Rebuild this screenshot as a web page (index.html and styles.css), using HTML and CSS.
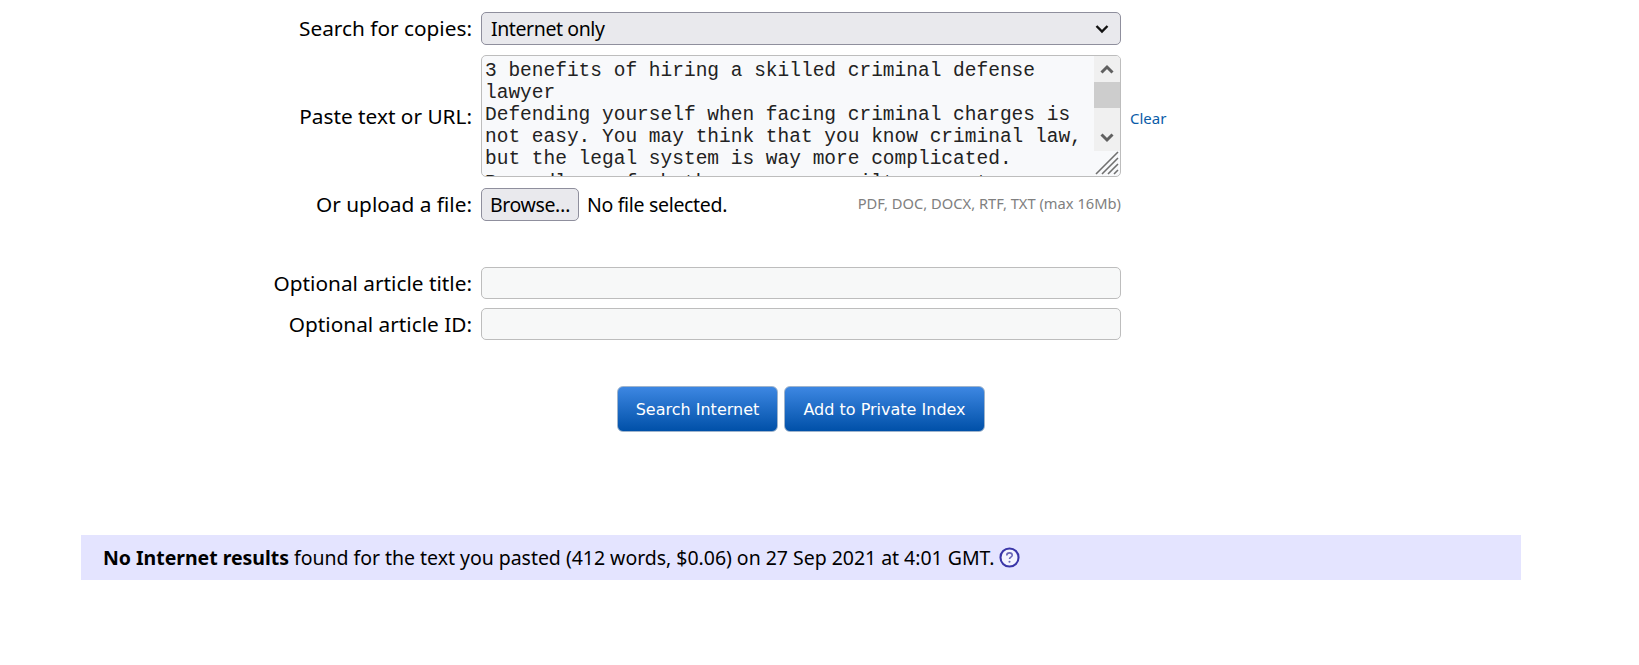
FILE: index.html
```html
<!DOCTYPE html>
<html lang="en">
<head>
  <meta charset="UTF-8" />
  <title>Copyscape Premium</title>
  <link rel="stylesheet" href="styles.css">
</head>
<body>

  <form class="search-form">
    <label class="form-label label-raised">Search for copies:</label>
    <div class="select-box">
      <span>Internet only</span>
      <svg class="select-arrow" width="14" height="10" viewBox="0 0 14 10"><path d="M1.500 2l5.500 5.500L12.500 2" fill="none" stroke="#111" stroke-width="2.400"/></svg>
    </div>
    <div></div>

    <label class="form-label">Paste text or URL:</label>
    <div class="text-box">
      <div class="text-content">3 benefits of hiring a skilled criminal defense
lawyer
Defending yourself when facing criminal charges is
not easy. You may think that you know criminal law,
but the legal system is way more complicated.
<span class="text-last">Regardless of whether you are guilty or not</span></div>
      <div class="scrollbar">
        <div class="scroll-btn">
          <svg width="14" height="10" viewBox="0 0 14 10"><path d="M1.500 8.500L7 3l5.500 5.500" fill="none" stroke="#606060" stroke-width="3"/></svg>
        </div>
        <div class="scroll-thumb"></div>
        <div class="scroll-track"></div>
        <div class="scroll-btn">
          <svg width="14" height="10" viewBox="0 0 14 10"><path d="M1.500 1.500L7 7l5.500-5.500" fill="none" stroke="#606060" stroke-width="3"/></svg>
        </div>
      </div>
      <svg class="resize-grip" width="24" height="24" viewBox="0 0 24 24"><path d="M1 23L23 1M7 23L23 7M13 23l10-10M19 23l4-4" fill="none" stroke="#707070" stroke-width="1.600"/></svg>
    </div>
    <a class="clear-link">Clear</a>

    <label class="form-label label-raised file-cell">Or upload a file:</label>
    <div class="file-row file-cell">
      <span class="browse-btn">Browse…</span>
      <span class="file-name">No file selected.</span>
      <span class="file-types">PDF, DOC, DOCX, RTF, TXT (max 16Mb)</span>
    </div>
    <div></div>

    <label class="form-label optional-first">Optional article title:</label>
    <input class="text-input optional-first" type="text" />
    <div class="optional-first"></div>

    <label class="form-label row-tight">Optional article ID:</label>
    <input class="text-input row-tight" type="text" />
    <div></div>
  </form>

  <div class="actions">
    <button class="blue-btn btn-search" type="button">Search Internet</button>
    <button class="blue-btn btn-add" type="button">Add to Private Index</button>
  </div>

  <div class="result-banner">
    <b>No Internet results</b> found for the text you pasted (412 words, $0.06) on 27 Sep 2021 at 4:01 GMT.
    <svg class="help-icon" width="21" height="21" viewBox="0 0 20 20">
      <circle cx="10" cy="10" r="8.600" fill="#f4f4ff" stroke="#3a36a8" stroke-width="2"/>
      <path d="M7.400 8c0-1.600 1.200-2.400 2.600-2.400s2.600.8 2.600 2.200c0 1.900-2.600 1.900-2.600 3.700" fill="none" stroke="#6a67b8" stroke-width="1.500"/>
      <circle cx="10" cy="14" r="1" fill="#6a67b8"/>
    </svg>
  </div>

</body>
</html>
```

FILE: styles.css
```css
* {
  box-sizing: border-box;
}

body {
  margin: 0;
  padding: 12px 0 0;
  background-color: #ffffff;
  font-family: "Noto Sans", sans-serif;
  font-size: 19.5px;
  color: #000000;
}

.search-form {
  display: grid;
  grid-template-columns: 472px 640px auto;
  column-gap: 9px;
  row-gap: 10px;
  align-items: center;
}

.form-label {
  font-size: 20.8px;
  text-align: right;
  white-space: nowrap;
}

.label-raised {
  margin-bottom: 2px;
}

.select-box {
  height: 33px;
  padding: 0 9px;
  display: flex;
  align-items: center;
  justify-content: space-between;
  letter-spacing: -0.4px;
  background-color: #e9e9ed;
  border: 1px solid #8f8f9d;
  border-radius: 5px;
}

.select-arrow {
  margin-right: 2px;
}

.text-box {
  position: relative;
  height: 122px;
  display: flex;
  overflow: hidden;
  background-color: #f8f9fb;
  border: 1px solid #bdbdbd;
  border-radius: 5px;
}

.text-content {
  flex: 1;
  padding: 4px 3px 0;
  font-family: "Liberation Mono", monospace;
  font-size: 19.5px;
  line-height: 22px;
  color: #222222;
  white-space: pre;
  overflow: hidden;
}

.text-last {
  display: block;
  margin-top: 2px;
}

.scrollbar {
  width: 26px;
  height: 95px;
  display: flex;
  flex-direction: column;
  background-color: #f0f0f0;
}

.scroll-btn {
  height: 26px;
  display: flex;
  align-items: center;
  justify-content: center;
}

.scroll-thumb {
  height: 26px;
  background-color: #cdcdcd;
}

.scroll-track {
  flex: 1;
}

.resize-grip {
  position: absolute;
  right: 1px;
  bottom: 1px;
}

.clear-link {
  margin-top: 4px;
  font-size: 15px;
  color: #0a5ca8;
}

.file-cell {
  margin-top: 1px;
}

.file-row {
  height: 33px;
  display: flex;
  align-items: center;
}

.browse-btn {
  width: 98px;
  height: 33px;
  padding: 0 8px;
  display: flex;
  align-items: center;
  letter-spacing: -0.4px;
  white-space: nowrap;
  background-color: #e9e9ed;
  border: 1px solid #8f8f9d;
  border-radius: 5px;
}

.file-name {
  margin-left: 8px;
  letter-spacing: -0.32px;
}

.file-types {
  margin-left: auto;
  margin-bottom: 3px;
  font-size: 14.7px;
  color: #808080;
}

.optional-first {
  margin-top: 36px;
}

.row-tight {
  margin-top: -1px;
}

.text-input {
  height: 32px;
  padding: 0 8px;
  background-color: #f7f8f8;
  border: 1px solid #bdbdbd;
  border-radius: 5px;
}

.actions {
  margin: 46px 0 0 617px;
  display: flex;
  gap: 6px;
}

.blue-btn {
  height: 46px;
  padding: 0;
  font-family: "DejaVu Sans", sans-serif;
  font-size: 16px;
  color: #ffffff;
  background: linear-gradient(#3d87e2, #0050a8);
  border: 1px solid #9fb4cc;
  border-radius: 6px;
}

.btn-search {
  width: 161px;
}

.btn-add {
  width: 201px;
}

.result-banner {
  width: 1440px;
  height: 45px;
  margin: 103px 0 0 81px;
  padding-left: 22px;
  line-height: 45px;
  letter-spacing: -0.03px;
  background-color: #e4e4ff;
}

.help-icon {
  vertical-align: -3px;
}
```
